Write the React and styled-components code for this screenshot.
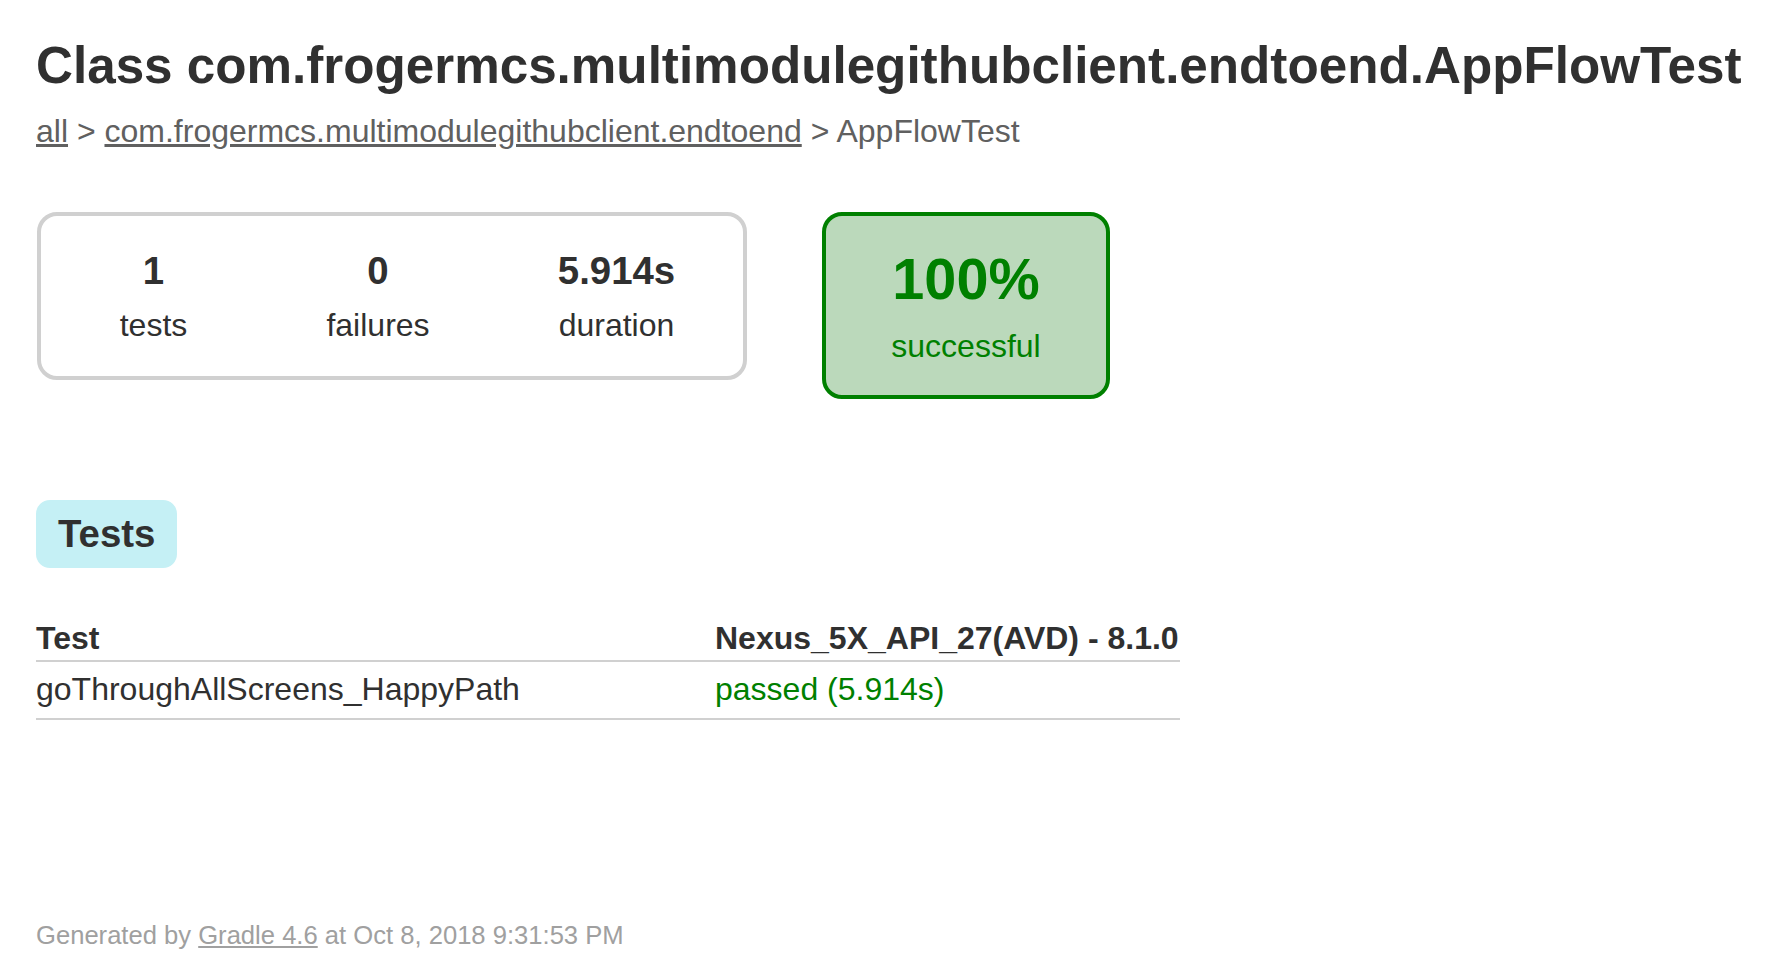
import React from 'react';
import styled, { createGlobalStyle } from 'styled-components';

const GlobalStyle = createGlobalStyle`
    html, body {
        margin: 0;
        padding: 0;
        background: #ffffff;
    }
    body {
        font-family: "Liberation Sans", Arial, Helvetica, sans-serif;
        font-size: 32px;
        color: #303030;
    }
`

const Content = styled.div`
    padding: 36px 36px 0 36px;
`

const Title = styled.h1`
    margin: 0;
    font-size: 51.2px;
    line-height: 59px;
    font-weight: bold;
    white-space: nowrap;
    color: #303030;
`

const Breadcrumbs = styled.div`
    margin-top: 18px;
    line-height: 37px;
    color: #606060;
    white-space: nowrap;

    a {
        color: #606060;
        text-decoration: underline;
    }
`

const Summary = styled.div`
    display: flex;
    align-items: flex-start;
    gap: 75px;
    margin-top: 62px;
    margin-left: 1px;
`

const SummaryGroup = styled.div`
    display: flex;
    border: solid 4px #d0d0d0;
    border-radius: 20px;
`

const InfoBox = styled.div`
    width: ${props => props.width}px;
    padding: 33px 0 32px 0;
    text-align: center;
`

const Counter = styled.div`
    font-size: 38.4px;
    line-height: 44px;
    font-weight: bold;
    margin-bottom: 14px;
`

const Label = styled.div`
    line-height: 37px;
`

const SuccessRate = styled.div`
    width: 280px;
    padding: 30px 0;
    text-align: center;
    border: solid 4px #008000;
    border-radius: 20px;
    background-color: #bbd9bb;
    color: #008000;
`

const Percent = styled.div`
    font-size: 57.6px;
    line-height: 66px;
    font-weight: bold;
    margin-bottom: 16px;
`

const TabLinks = styled.div`
    display: flex;
    margin-top: 101px;
`

const Tab = styled.div`
    padding: 10px 20px;
    border: solid 2px #c5f0f5;
    border-radius: 14px;
    background-color: #c5f0f5;
`

const TabTitle = styled.h2`
    margin: 0;
    font-size: 38.4px;
    line-height: 44px;
    font-weight: bold;
    color: #303030;
`

const Table = styled.table`
    margin-top: 52px;
    border-collapse: collapse;
    width: 1144px;
`

const Th = styled.th`
    text-align: left;
    font-weight: bold;
    line-height: 37px;
    padding: 0 0 3px 0;
    border-bottom: solid 2px #d0d0d0;
    width: ${props => props.width || 'auto'};
    white-space: nowrap;
`

const Td = styled.td`
    text-align: left;
    line-height: 37px;
    padding: 9px 0 10px 0;
    border-bottom: solid 2px #d0d0d0;
    color: ${props => props.success ? '#008000' : '#303030'};
    white-space: nowrap;
`

const Footer = styled.div`
    margin-top: 201px;
    font-size: 25.6px;
    line-height: 29.5px;
    color: #a0a0a0;
    white-space: nowrap;

    a {
        color: #a0a0a0;
        text-decoration: underline;
    }
`

const counters = [
    { value: '1', label: 'tests', width: 225 },
    { value: '0', label: 'failures', width: 224 },
    { value: '5.914s', label: 'duration', width: 253 },
];

const App = () => {
    return (
        <>
            <GlobalStyle />
            <Content>
                <Title>Class com.frogermcs.multimodulegithubclient.endtoend.AppFlowTest</Title>
                <Breadcrumbs>
                    <a href="#all">all</a> &gt; <a href="#package">com.frogermcs.multimodulegithubclient.endtoend</a> &gt; AppFlowTest
                </Breadcrumbs>
                <Summary>
                    <SummaryGroup>
                        {counters.map(c => (
                            <InfoBox key={c.label} width={c.width}>
                                <Counter>{c.value}</Counter>
                                <Label>{c.label}</Label>
                            </InfoBox>
                        ))}
                    </SummaryGroup>
                    <SuccessRate>
                        <Percent>100%</Percent>
                        <Label>successful</Label>
                    </SuccessRate>
                </Summary>
                <TabLinks>
                    <Tab>
                        <TabTitle>Tests</TabTitle>
                    </Tab>
                </TabLinks>
                <Table>
                    <thead>
                        <tr>
                            <Th width="679px">Test</Th>
                            <Th>Nexus_5X_API_27(AVD) - 8.1.0</Th>
                        </tr>
                    </thead>
                    <tbody>
                        <tr>
                            <Td>goThroughAllScreens_HappyPath</Td>
                            <Td success>passed (5.914s)</Td>
                        </tr>
                    </tbody>
                </Table>
                <Footer>
                    Generated by <a href="#gradle">Gradle 4.6</a> at Oct 8, 2018 9:31:53 PM
                </Footer>
            </Content>
        </>
    );
};

export default App;
